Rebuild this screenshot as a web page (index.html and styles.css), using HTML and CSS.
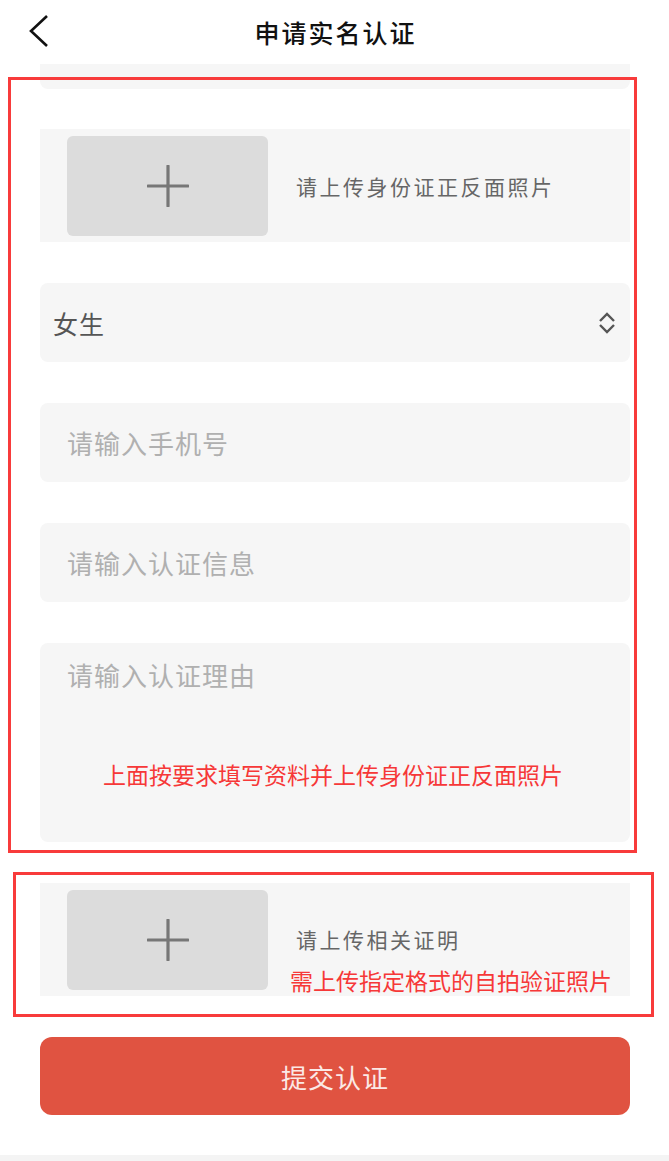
FILE: index.html
```html
<!DOCTYPE html>
<html lang="zh-CN">
<head>
<meta charset="utf-8">
<title>申请实名认证</title>
<link rel="stylesheet" href="styles.css">
</head>
<body>
<header class="topbar">
  <div class="back">
    <svg width="22" height="36" viewBox="0 0 22 36"><polyline points="18,2 2,17 18,32" fill="none" stroke="#111" stroke-width="2.6" stroke-linejoin="miter"/></svg>
  </div>
  <h1 class="title">申请实名认证</h1>
  <div></div>
</header>
<main class="form">
  <div class="stub"></div>
  <div class="upload">
    <div class="upload-box">
      <svg width="42" height="42" viewBox="0 0 42 42"><path d="M21 1V41M1 21H41" stroke="#777" stroke-width="3.2" stroke-linecap="round"/></svg>
    </div>
    <div class="upload-text">请上传身份证正反面照片</div>
  </div>
  <div class="field select">
    <span class="value">女生</span>
    <svg width="18" height="22" viewBox="0 0 18 22"><polyline points="2,9 9,2 16,9" fill="none" stroke="#555" stroke-width="2.4"/><polyline points="2,13 9,20 16,13" fill="none" stroke="#555" stroke-width="2.4"/></svg>
  </div>
  <div class="field input"><span class="placeholder">请输入手机号</span></div>
  <div class="field input"><span class="placeholder">请输入认证信息</span></div>
  <div class="field textarea">
    <span class="placeholder">请输入认证理由</span>
    <p class="note note-center">上面按要求填写资料并上传身份证正反面照片</p>
  </div>
  <div class="upload">
    <div class="upload-box">
      <svg width="42" height="42" viewBox="0 0 42 42"><path d="M21 1V41M1 21H41" stroke="#777" stroke-width="3.2" stroke-linecap="round"/></svg>
    </div>
    <div class="upload-col">
      <div class="upload-text">请上传相关证明</div>
      <p class="note note-shift">需上传指定格式的自拍验证照片</p>
    </div>
  </div>
  <button class="submit" type="button">提交认证</button>
</main>
<div class="footer-strip"></div>
<div class="mark mark-one"></div>
<div class="mark mark-two"></div>
</body>
</html>
```
FILE: styles.css
```css
* { box-sizing: border-box; }
html, body { margin: 0; padding: 0; }
body {
  position: relative;
  width: 669px;
  min-height: 1161px;
  background: #fff;
  font-family: "Noto Sans CJK SC", "Noto Sans", sans-serif;
  color: #333;
  display: flex;
  flex-direction: column;
}
.topbar {
  height: 64px;
  display: grid;
  grid-template-columns: 1fr auto 1fr;
  align-items: center;
}
.back {
  padding-left: 29px;
  display: flex;
  align-items: center;
  height: 64px;
}
.title {
  margin: 0;
  font-size: 25px;
  font-weight: 500;
  letter-spacing: 2px;
  color: #111;
  line-height: 64px;
  padding-left: 2px;
}
.form {
  display: flex;
  flex-direction: column;
  gap: 41px;
  padding: 0 39px 0 40px;
}
.stub {
  height: 25px;
  margin-bottom: -1px;
  background: #f6f6f6;
  border-radius: 0 0 8px 8px;
}
.upload {
  height: 113px;
  background: #f6f6f6;
  display: flex;
  align-items: center;
  padding: 0 27px;
}
.upload-box {
  width: 201px;
  height: 100px;
  border-radius: 6px;
  background: #dcdcdc;
  display: flex;
  align-items: center;
  justify-content: center;
  flex-shrink: 0;
}
.upload-text {
  margin-left: 28px;
  font-size: 21px;
  letter-spacing: 2.5px;
  color: #666;
  line-height: 30px;
}
.upload-col {
  align-self: flex-start;
  padding-top: 41px;
  display: flex;
  flex-direction: column;
  gap: 11px;
}
.field {
  background: #f6f6f6;
  border-radius: 8px;
}
.select {
  height: 79px;
  display: flex;
  align-items: center;
  justify-content: space-between;
  padding: 0 14px 0 13px;
}
.value {
  font-size: 25px;
  letter-spacing: 1px;
  color: #555;
}
.input {
  height: 79px;
  display: flex;
  align-items: center;
  padding: 0 27px;
}
.placeholder {
  font-size: 26px;
  letter-spacing: 1px;
  color: #b0b0b0;
  line-height: 30px;
}
.textarea {
  height: 199px;
  padding: 17px 27px 0;
  display: flex;
  flex-direction: column;
}
.note {
  margin: 0;
  font-size: 23px;
  line-height: 30px;
  color: #f63838;
}
.note-center {
  margin-top: 69px;
  text-align: center;
  padding-right: 4px;
}
.note-shift {
  margin-left: 22px;
  white-space: nowrap;
}
.submit {
  height: 78px;
  border: 0;
  border-radius: 12px;
  background: #e05341;
  color: #fbe9e6;
  font-family: inherit;
  font-size: 26px;
  letter-spacing: 1px;
  cursor: pointer;
}
.footer-strip {
  margin-top: 40px;
  flex: 1;
  min-height: 6px;
  background: #f4f4f4;
}
.mark {
  position: absolute;
  border: 3px solid #f83b3b;
  pointer-events: none;
}
.mark-one {
  left: 8px;
  top: 77px;
  width: 629px;
  height: 776px;
}
.mark-two {
  left: 13px;
  top: 872px;
  width: 641px;
  height: 145px;
}
```
